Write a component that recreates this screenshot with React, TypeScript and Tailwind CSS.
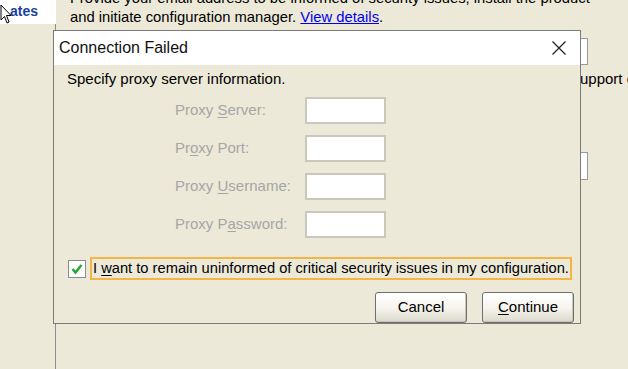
import React from "react";

const font = { fontFamily: '"Liberation Sans", Arial, sans-serif' };

const U = ({ children }: { children: React.ReactNode }) => (
  <span className="underline underline-offset-2">{children}</span>
);

const fields: { label: React.ReactNode }[] = [
  { label: <>Proxy <U>S</U>erver:</> },
  { label: <>Pr<U>o</U>xy Port:</> },
  { label: <>Proxy <U>U</U>sername:</> },
  { label: <>Proxy P<U>a</U>ssword:</> },
];

const XpButton = ({ children }: { children: React.ReactNode }) => (
  <button className="w-[92px] h-[31px] rounded-[3px] border border-[#6f6f6f] bg-gradient-to-b from-[#ffffff] via-[#f6f5ef] to-[#dcd9cb] text-[15px] text-black shadow-[inset_-1px_-1px_0_#c9c6b6]">
    {children}
  </button>
);

export default function App() {
  return (
    <div
      className="relative w-[628px] h-[369px] overflow-hidden bg-[#ece9d8] text-black"
      style={font}
    >
      {/* page behind the dialog */}
      <div className="flex h-full">
        <div className="w-[56px] flex flex-col">
          <div className="relative h-[24px] bg-white">
            <span className="absolute left-[10px] top-[1px] text-[14px] font-bold text-[#1a3f9c]">
              ates
            </span>
            <svg
              className="absolute left-0 top-[4px]"
              width="14"
              height="22"
              viewBox="0 0 14 22"
            >
              <path
                d="M1 1 L1 16 L4.5 12.5 L7 19 L9 18 L6.5 11.5 L11 11.5 Z"
                fill="white"
                stroke="black"
                strokeWidth="1"
              />
            </svg>
          </div>
          <div className="flex-1 border-r border-[#8d8d8d]" />
        </div>
        <div className="flex-1 pl-[14px] text-[14.8px] leading-[19px]">
          <div className="-mt-[11px] whitespace-nowrap">
            Provide your email address to be informed of security issues, install the product
          </div>
          <div className="whitespace-nowrap">
            and initiate configuration manager.{" "}
            <span className="text-[#0000ee] underline">View details</span>.
          </div>
        </div>
      </div>

      {/* controls peeking out on the right */}
      <div className="absolute left-[578px] top-[38px] w-[10px] h-[27px] border border-[#9a9a9a] bg-white" />
      <div className="absolute left-[580px] top-[68px] text-[15px] whitespace-nowrap">upport e</div>
      <div className="absolute left-[578px] top-[152px] w-[10px] h-[28px] border border-[#9a9a9a] bg-white" />

      {/* dialog */}
      <div className="absolute left-[53px] top-[30px] w-[528px] h-[294px] border border-[#7b7b7b] bg-[#ece9d8] flex flex-col">
        <div className="h-[34px] bg-white flex items-center justify-between pl-[5px] pr-[13px]">
          <span className="text-[16px] text-[#111]">Connection Failed</span>
          <svg width="16" height="16" viewBox="0 0 16 16">
            <path d="M1.5 1.5 L14.5 14.5 M14.5 1.5 L1.5 14.5" stroke="#222" strokeWidth="1.3" />
          </svg>
        </div>

        <div className="pl-[13px] pt-[4px] text-[15px] leading-[19px]">
          Specify proxy server information.
        </div>

        <div className="flex flex-col gap-[11px] pl-[121px] mt-[9px]">
          {fields.map((f, i) => (
            <div key={i} className="flex items-center h-[27px]">
              <span className="w-[130px] text-[15px] text-[#a6a6a6]">{f.label}</span>
              <div className="w-[81px] h-[27px] bg-white border-2 border-[#cac8bc]" />
            </div>
          ))}
        </div>

        <div className="flex items-center mt-[19px] pl-[14px]">
          <div className="w-[18px] h-[18px] border border-[#8a8a8a] bg-white flex items-center justify-center">
            <svg width="12" height="12" viewBox="0 0 12 12">
              <path d="M1.5 6 L4.5 9.5 L10.5 2" fill="none" stroke="#1faa2f" strokeWidth="2.4" />
            </svg>
          </div>
          <div className="ml-[4px] w-[482px] h-[23px] border-2 border-[#f5b545] flex items-center pl-[1px] text-[14.7px] whitespace-nowrap">
            <span>
              I <U>w</U>ant to remain uninformed of critical security issues in my configuration.
            </span>
          </div>
        </div>

        <div className="flex justify-end gap-[15px] pr-[6px] mt-[12px]">
          <XpButton>Cancel</XpButton>
          <XpButton>
            <U>C</U>ontinue
          </XpButton>
        </div>
      </div>
    </div>
  );
}
